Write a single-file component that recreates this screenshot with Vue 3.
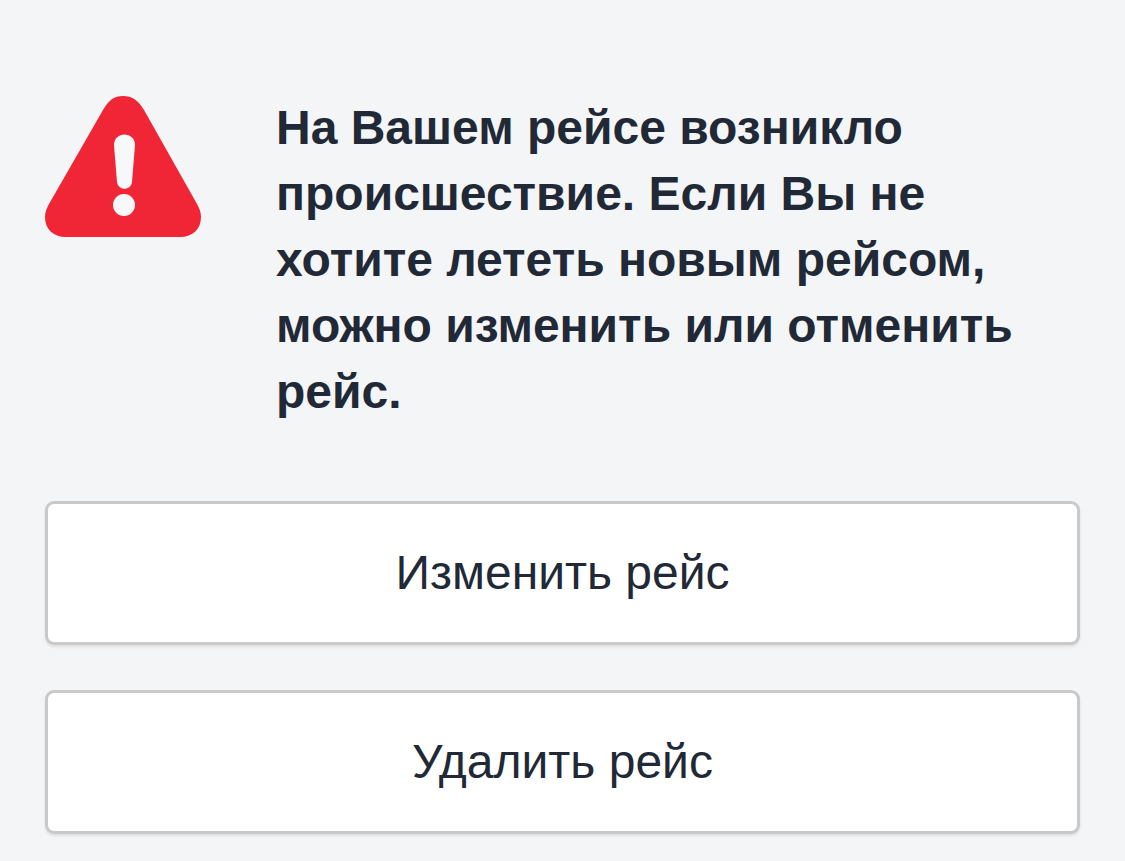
<script setup>
const actions = ['Изменить рейс', 'Удалить рейс']
</script>

<template>
  <main class="page">
    <section class="notice">
      <svg class="icon" viewBox="0 0 156 141" aria-hidden="true">
        <path fill="#f02535" d="M58 14C64 4 69 0 78 0C87 0 93 4 99 14L152 108Q156 115 156 121C156 133 148 141 135 141H21C8 141 0 133 0 121Q0 115 4 108Z" />
        <path fill="#f6f8f9" d="M69 49C69 35 90 35 90 49L87 86C86 95 73 95 72 86Z" />
        <circle fill="#f6f8f9" cx="79" cy="109" r="11" />
      </svg>
      <p class="message">
        На Вашем рейсе возникло происшествие. Если Вы не хотите лететь новым рейсом, можно изменить или отменить рейс.
      </p>
    </section>
    <button v-for="label in actions" :key="label" type="button" class="action">{{ label }}</button>
  </main>
</template>

<style>
body {
  margin: 0;
  background: #f3f5f7;
}
</style>

<style scoped>
.page {
  display: flex;
  flex-direction: column;
  gap: 45px;
  padding: 95px 45px 27px;
  font-family: "Liberation Sans", Arial, sans-serif;
  color: #222936;
}

.notice {
  display: flex;
  align-items: flex-start;
  gap: 75px;
  margin-bottom: 31px;
}

.icon {
  flex: none;
  width: 156px;
  height: 141px;
  margin-top: 1px;
}

.message {
  flex: 1;
  margin: 0;
  font-size: 48px;
  font-weight: 700;
  line-height: 66px;
}

.action {
  width: 100%;
  min-height: 144px;
  padding: 0;
  border: 3px solid #c9c9ca;
  border-radius: 9px;
  background: #fff;
  box-shadow: 0 2px 3px rgba(0, 0, 0, 0.09);
  color: inherit;
  font-family: inherit;
  font-size: 48px;
  line-height: 66px;
  cursor: pointer;
}
</style>
